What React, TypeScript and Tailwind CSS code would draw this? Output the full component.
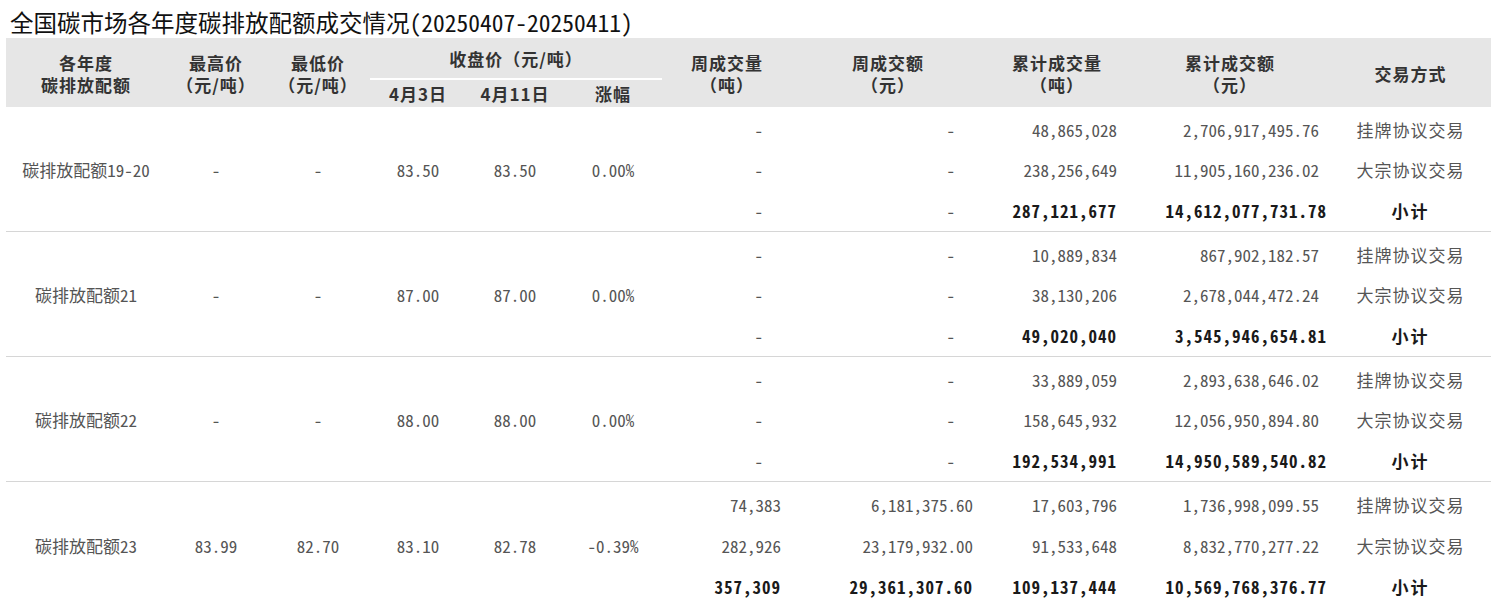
type Group = {
  name: string
  high: string
  low: string
  open: string
  close: string
  change: string
  rows: string[][]
}

const groups: Group[] = [
  {
    name: '碳排放配额19-20',
    high: '-',
    low: '-',
    open: '83.50',
    close: '83.50',
    change: '0.00%',
    rows: [
      ['-', '-', '48,865,028', '2,706,917,495.76', '挂牌协议交易'],
      ['-', '-', '238,256,649', '11,905,160,236.02', '大宗协议交易'],
      ['-', '-', '287,121,677', '14,612,077,731.78', '小计'],
    ],
  },
  {
    name: '碳排放配额21',
    high: '-',
    low: '-',
    open: '87.00',
    close: '87.00',
    change: '0.00%',
    rows: [
      ['-', '-', '10,889,834', '867,902,182.57', '挂牌协议交易'],
      ['-', '-', '38,130,206', '2,678,044,472.24', '大宗协议交易'],
      ['-', '-', '49,020,040', '3,545,946,654.81', '小计'],
    ],
  },
  {
    name: '碳排放配额22',
    high: '-',
    low: '-',
    open: '88.00',
    close: '88.00',
    change: '0.00%',
    rows: [
      ['-', '-', '33,889,059', '2,893,638,646.02', '挂牌协议交易'],
      ['-', '-', '158,645,932', '12,056,950,894.80', '大宗协议交易'],
      ['-', '-', '192,534,991', '14,950,589,540.82', '小计'],
    ],
  },
  {
    name: '碳排放配额23',
    high: '83.99',
    low: '82.70',
    open: '83.10',
    close: '82.78',
    change: '-0.39%',
    rows: [
      ['74,383', '6,181,375.60', '17,603,796', '1,736,998,099.55', '挂牌协议交易'],
      ['282,926', '23,179,932.00', '91,533,648', '8,832,770,277.22', '大宗协议交易'],
      ['357,309', '29,361,307.60', '109,137,444', '10,569,768,376.77', '小计'],
    ],
  },
]

const cols = 'grid grid-cols-[160px_100px_104px_96px_98px_98px_130px_192px_146px_200px_161px]'

// right padding of each numeric column so the figures line up like the source
const numPad = ['pr-[11px]', 'pr-[11px]', 'pr-[13px]', 'pr-[11px]']

function NumCell({ value, col, bold }: { value: string; col: number; bold: boolean }) {
  const isDash = value === '-'
  return (
    <div className={`flex items-center justify-end ${numPad[col]}`}>
      <span
        className={
          isDash
            ? 'mr-[18px] text-[#555]'
            : bold
              ? `font-bold tracking-[1px] text-[#1a1a1a] ${col === 3 ? 'mr-[-8px]' : ''}`
              : 'text-[#555]'
        }
      >
        {value}
      </span>
    </div>
  )
}

export default function App() {
  return (
    <div className="w-[1500px] h-[609px] overflow-hidden bg-white font-['Noto_Sans_CJK_SC',sans-serif] [font-feature-settings:'hwid'] text-[17px]">
      <h1 className="h-[38px] pl-[10px] pt-[6px] text-[23.5px] leading-[32px] font-normal text-[#111]">
        全国碳市场各年度碳排放配额成交情况(20250407-20250411)
      </h1>

      <div className="ml-[6px] w-[1485px]">
        {/* header: full-width brackets, so no half-width forms here */}
        <div className={`${cols} grid-rows-[42px_27px] h-[69px] bg-[#e6e6e6] font-bold text-[#333] leading-[22px] tracking-[1px] [font-feature-settings:normal]`}>
          <div className="row-span-2 flex flex-col items-center justify-center pt-[3px]">
            <span>各年度</span>
            <span>碳排放配额</span>
          </div>
          <div className="row-span-2 flex flex-col items-center justify-center pt-[3px]">
            <span>最高价</span>
            <span>（元/吨）</span>
          </div>
          <div className="row-span-2 flex flex-col items-center justify-center pt-[3px]">
            <span>最低价</span>
            <span>（元/吨）</span>
          </div>
          <div className="col-span-3 flex items-center justify-center pt-[1px] border-b-2 border-white">
            收盘价（元/吨）
          </div>
          <div className="row-span-2 col-start-7 flex flex-col items-center justify-center pt-[3px]">
            <span>周成交量</span>
            <span>（吨）</span>
          </div>
          <div className="row-span-2 flex flex-col items-center justify-center pt-[3px]">
            <span>周成交额</span>
            <span>（元）</span>
          </div>
          <div className="row-span-2 flex flex-col items-center justify-center pt-[3px]">
            <span>累计成交量</span>
            <span>（吨）</span>
          </div>
          <div className="row-span-2 flex flex-col items-center justify-center pt-[3px]">
            <span>累计成交额</span>
            <span>（元）</span>
          </div>
          <div className="row-span-2 flex items-center justify-center pt-[3px]">交易方式</div>
          <div className="col-start-4 row-start-2 flex items-center justify-center">4月3日</div>
          <div className="col-start-5 row-start-2 flex items-center justify-center">4月11日</div>
          <div className="col-start-6 row-start-2 flex items-center justify-center">涨幅</div>
        </div>

        {/* body */}
        {groups.map((g) => (
          <div
            key={g.name}
            className={`${cols} grid-rows-3 h-[125px] pt-[2px] border-b border-[#d6d6d6] last:border-b-0 text-[#555]`}
          >
            <div className="row-span-3 flex items-center justify-center">{g.name}</div>
            <div className="row-span-3 flex items-center justify-center">{g.high}</div>
            <div className="row-span-3 flex items-center justify-center">{g.low}</div>
            <div className="row-span-3 flex items-center justify-center">{g.open}</div>
            <div className="row-span-3 flex items-center justify-center">{g.close}</div>
            <div className="row-span-3 flex items-center justify-center">{g.change}</div>
            {g.rows.map((r, i) => {
              const bold = i === 2
              return [
                ...r.slice(0, 4).map((v, c) => (
                  <NumCell key={`${i}-${c}`} value={v} col={c} bold={bold} />
                )),
                <div
                  key={`${i}-t`}
                  className={`flex items-center justify-center ${
                    bold ? 'font-bold tracking-[2px] text-[#1a1a1a]' : 'tracking-[1px] text-[#555]'
                  }`}
                >
                  {r[4]}
                </div>,
              ]
            })}
          </div>
        ))}
      </div>
    </div>
  )
}
